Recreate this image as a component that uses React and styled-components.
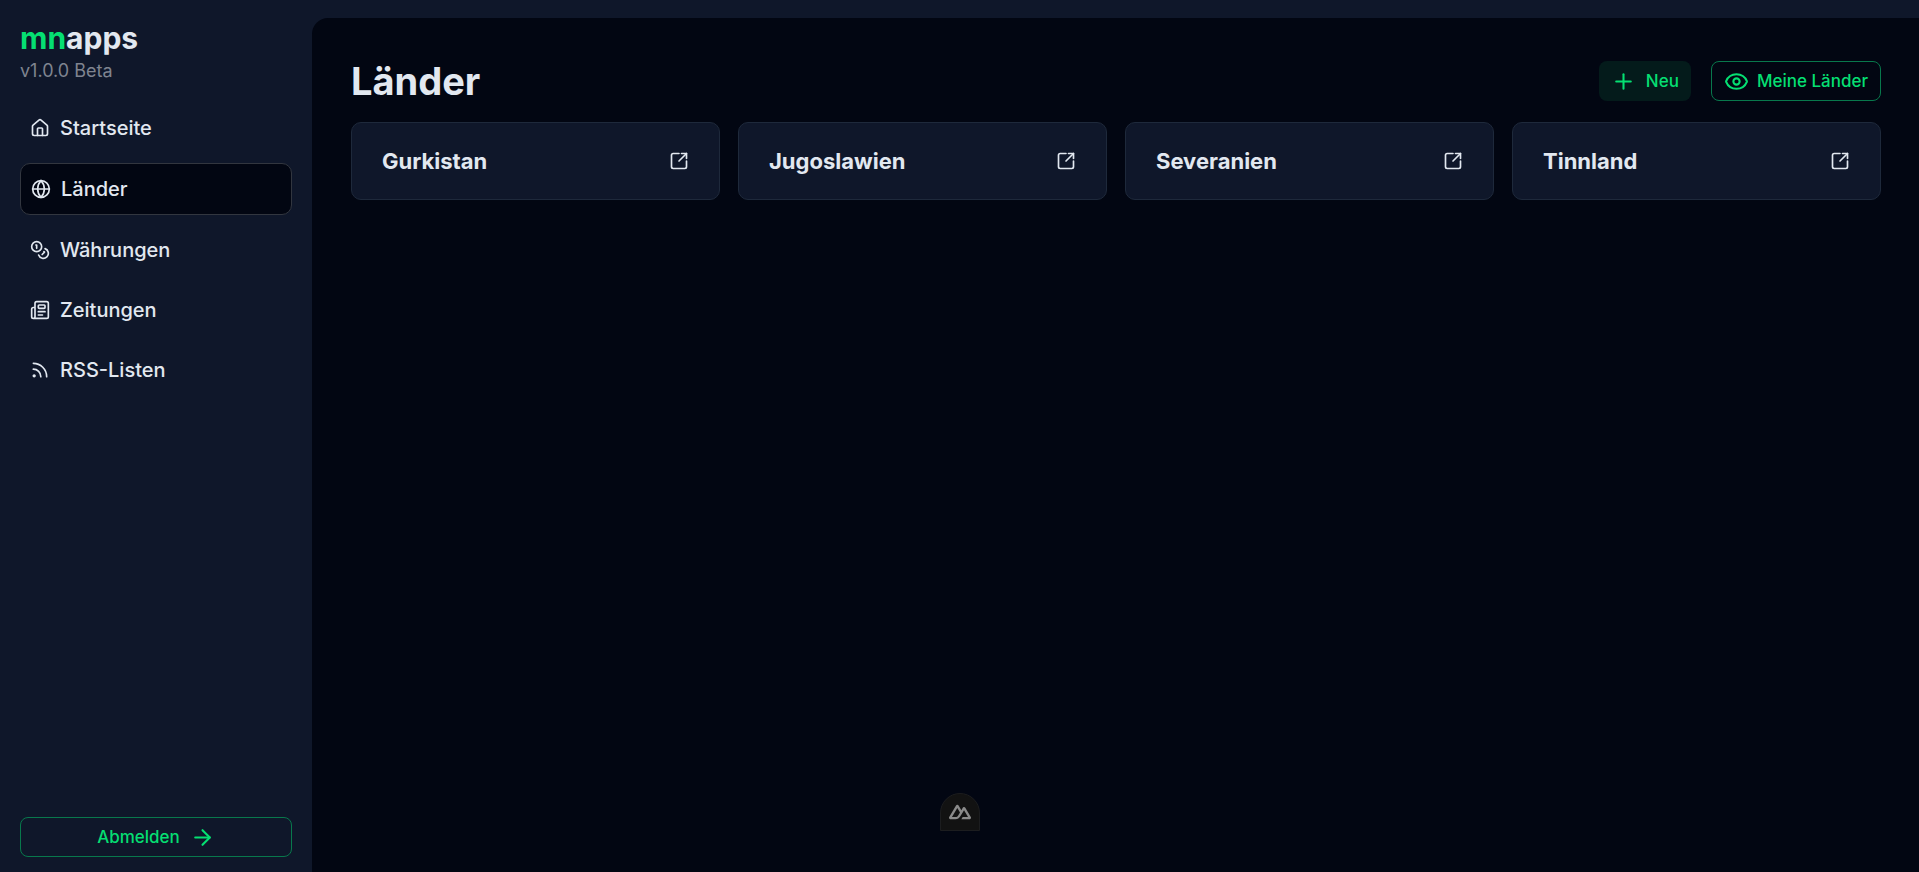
import React, { useState } from 'react'
import styled, { createGlobalStyle, css } from 'styled-components'
import { House, Globe, Coins, Newspaper, Rss, ArrowRight, Plus, Eye } from 'lucide-react'

const navItems = [
    { name: "Startseite", icon: House },
    { name: "Länder", icon: Globe },
    { name: "Währungen", icon: Coins },
    { name: "Zeitungen", icon: Newspaper },
    { name: "RSS-Listen", icon: Rss },
]

const countries = ["Gurkistan", "Jugoslawien", "Severanien", "Tinnland"]

const OpenIcon = () => (
    <svg width="20" height="20" viewBox="0 0 24 24" fill="none" stroke="currentColor" strokeWidth="2" strokeLinecap="round" strokeLinejoin="round" aria-hidden="true">
        <path d="M12 3H5a2 2 0 0 0-2 2v14a2 2 0 0 0 2 2h14a2 2 0 0 0 2-2v-7" />
        <path d="M15 3h6v6" />
        <path d="m12 12 9-9" />
    </svg>
)

const NuxtIcon = () => (
    <svg width="22" height="22" viewBox="0 0 24 24" fill="currentColor" aria-hidden="true">
        <path d="M13.4642 19.8295h8.9218c.2834 0 .5618-.0723.8072-.2098a1.5899 1.5899 0 0 0 .5908-.5732 1.5293 1.5293 0 0 0 .216-.783 1.529 1.529 0 0 0-.2167-.7828L17.7916 7.4142a1.59 1.59 0 0 0-.5907-.573 1.6524 1.6524 0 0 0-.807-.2099c-.2833 0-.5616.0724-.807.2098a1.59 1.59 0 0 0-.5907.5731L13.4642 9.99l-2.9954-5.0366a1.5913 1.5913 0 0 0-.591-.573 1.6533 1.6533 0 0 0-.8071-.2098c-.2834 0-.5617.0723-.8072.2097a1.5913 1.5913 0 0 0-.591.573L.2168 17.4808A1.5292 1.5292 0 0 0 0 18.2635c-.0001.2749.0744.545.216.783a1.59 1.59 0 0 0 .5908.5732c.2454.1375.5238.2098.8072.2098h5.6003c2.219 0 3.8554-.9454 4.9813-2.7899l2.7337-4.5922L16.3935 9.99l4.3944 7.382h-5.8586zm-6.341-2.4601l-3.9083-.0009 5.8586-9.8421 2.9232 4.921-1.9572 3.2892c-.7478 1.1967-1.5972 1.6328-2.9163 1.6328z" />
    </svg>
)

const Sidebar = ({ active, setActive }) => {
    return (
        <Aside>
            <Brand>
                <Logo href="#"><span>mn</span>apps</Logo>
                <Version>v1.0.0 Beta</Version>
            </Brand>
            <Nav>
                {navItems.map(({ name, icon: Icon }) => (
                    <NavLink key={name} href="#" $active={active === name} onClick={() => setActive(name)}>
                        <Icon size={20} />
                        {name}
                    </NavLink>
                ))}
            </Nav>
            <Button $outlined>
                Abmelden
                <ArrowRight size={25} />
            </Button>
        </Aside>
    )
}

const App = () => {
    const [active, setActive] = useState("Länder")

    return (
        <Layout>
            <GlobalStyle />
            <Sidebar active={active} setActive={setActive} />
            <Main>
                <Header>
                    <Title>Länder</Title>
                    <Actions>
                        <Button><Plus size={25} />Neu</Button>
                        <Button $outlined $compact><Eye size={25} />Meine Länder</Button>
                    </Actions>
                </Header>
                <Grid>
                    {countries.map((country) => (
                        <Card key={country} href="#">
                            <CardTitle>{country}</CardTitle>
                            <OpenIcon />
                        </Card>
                    ))}
                </Grid>
            </Main>
            <DevTools aria-label="Nuxt DevTools"><NuxtIcon /></DevTools>
        </Layout>
    )
}

export default App

const GlobalStyle = createGlobalStyle`
* {
    box-sizing: border-box;
}
body {
    margin: 0;
    background: #0f172a;
    color: #e2e8f0;
    font-family: Inter, "Liberation Sans", sans-serif;
}
a {
    color: inherit;
    text-decoration: none;
}
h1, h2, p {
    margin: 0;
}
`

const Layout = styled.div`
    display: grid;
    grid-template-columns: 312px 1fr;
    min-height: 100vh;
`

const Aside = styled.aside`
    display: flex;
    flex-direction: column;
    padding: 20px 20px 15px;
`

const Brand = styled.div`
    display: flex;
    flex-direction: column;
    margin-bottom: 18px;
`

const Logo = styled.a`
    font-size: 30px;
    font-weight: 700;
    line-height: 37px;
    span {
        color: #05df72;
    }
`

const Version = styled.p`
    font-size: 18px;
    line-height: 28px;
    color: #7f8490;
`

const Nav = styled.nav`
    display: flex;
    flex-direction: column;
    gap: 10px;
    flex: 1;
`

const NavLink = styled.a`
    display: flex;
    align-items: center;
    gap: 10px;
    padding: 10px;
    font-size: 20px;
    font-weight: 500;
    line-height: 30px;
    border-radius: 10px;
    ${({ $active }) => $active && css`
        background: #020612;
        border: 1px solid #32363f;
    `}
`

const Button = styled.button`
    display: flex;
    align-items: center;
    justify-content: center;
    gap: ${({ $compact }) => ($compact ? "8px" : "10px")};
    height: 40px;
    padding: 0 12px;
    font-family: inherit;
    font-size: 17px;
    font-weight: 500;
    color: #05df72;
    background: #041b1b;
    border: none;
    border-radius: 8px;
    cursor: pointer;
    ${({ $outlined }) => $outlined && css`
        background: transparent;
        border: 1px solid #08784c;
    `}
`

const Main = styled.main`
    margin-top: 18px;
    padding: 40px 38px 40px 39px;
    background: #020612;
    border-top-left-radius: 16px;
`

const Header = styled.header`
    display: flex;
    align-items: center;
    justify-content: space-between;
    margin-bottom: 18px;
`

const Title = styled.h1`
    font-size: 38px;
    font-weight: 700;
    line-height: 46px;
`

const Actions = styled.div`
    display: flex;
    gap: 20px;
`

const Grid = styled.div`
    display: grid;
    grid-template-columns: repeat(4, 1fr);
    gap: 18px;
`

const Card = styled.a`
    display: flex;
    align-items: center;
    justify-content: space-between;
    padding: 22px 30px;
    background: #0f172a;
    border: 1px solid #1e293b;
    border-radius: 10px;
`

const CardTitle = styled.h2`
    font-size: 22px;
    font-weight: 700;
    line-height: 32px;
`

const DevTools = styled.button`
    position: fixed;
    left: 50%;
    bottom: 41px;
    transform: translateX(-50%);
    display: flex;
    align-items: center;
    justify-content: center;
    width: 40px;
    height: 38px;
    padding: 0;
    color: #8a8a8a;
    background: #121212;
    border: 1px solid #1c1d1f;
    border-radius: 20px 20px 0 0;
    cursor: pointer;
`
